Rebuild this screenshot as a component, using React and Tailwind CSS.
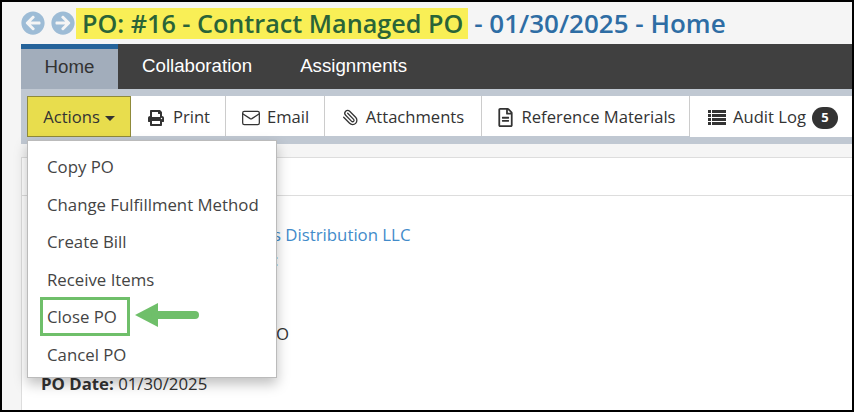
import React from 'react';
import { FaArrowCircleLeft, FaArrowCircleRight, FaPrint, FaRegFileAlt } from 'react-icons/fa';
import { Mail, Paperclip } from 'lucide-react';

const toolbarItems = [
    { label: 'Print', icon: <FaPrint size={16} />, width: 'w-[95px]', gap: 'gap-[9px] pl-[2px]' },
    { label: 'Email', icon: <Mail size={20} strokeWidth={1.5} />, width: 'w-[99px]', gap: 'gap-[6px]' },
    { label: 'Attachments', icon: <Paperclip size={17} strokeWidth={1.8} className="-scale-x-100" />, width: 'w-[157px]', gap: 'gap-[7px]' },
    { label: 'Reference Materials', icon: <FaRegFileAlt size={19} />, width: 'w-[208px]', gap: 'gap-[7px]' },
];

const menuItems = ['Copy PO', 'Change Fulfillment Method', 'Create Bill', 'Receive Items', 'Close PO', 'Cancel PO'];

const ListIcon = () => (
    <svg width="18" height="15" viewBox="0 0 18 15" fill="currentColor">
        <rect x="0" y="0" width="3" height="3" />
        <rect x="4" y="0" width="14" height="3" />
        <rect x="0" y="4" width="3" height="3" />
        <rect x="4" y="4" width="14" height="3" />
        <rect x="0" y="8" width="3" height="3" />
        <rect x="4" y="8" width="14" height="3" />
        <rect x="0" y="12" width="3" height="3" />
        <rect x="4" y="12" width="14" height="3" />
    </svg>
);

const App = () => {
    return (
        <div className="relative w-[854px] h-[412px] overflow-hidden border-2 border-black bg-[#f5f5f5] font-['Open_Sans','Noto_Sans',sans-serif] text-[#333]">
            <div className="h-[42px] flex items-center pl-[19px]">
                <FaArrowCircleLeft size={24} className="text-[#9dbcd6]" />
                <FaArrowCircleRight size={24} className="text-[#9dbcd6] ml-[6px]" />
                <h1 className="ml-[1px] font-semibold text-[#2e6da4] whitespace-nowrap flex items-center">
                    <span className="inline-block h-[31px] leading-[31px] text-[25.2px] bg-[#f9ef56] text-[#2a6438] pl-[6px] pr-[5px]">PO: #16 - Contract Managed PO</span>
                    <span className="ml-[6px] text-[26px]">- 01/30/2025 - Home</span>
                </h1>
            </div>

            <div className="ml-[19px]">
                <div className="h-[45px] bg-[#404040] flex font-['Liberation_Sans',sans-serif] text-[18.7px] text-white">
                    <div className="w-[97px] bg-[#a2adbb] border-t-[5px] border-[#25639a] text-[#333] flex items-center justify-center pb-[3px]">Home</div>
                    <div className="ml-[24px] flex items-center pb-[1px]">Collaboration</div>
                    <div className="ml-[48px] flex items-center pb-[1px]">Assignments</div>
                </div>

                <div className="h-[55px] bg-[#c0c8d2] pt-[7px] flex items-start text-[16.6px]">
                    <div className="ml-[6px] w-[104px] h-[41px] bg-[#e8dd4d] border border-[#8f8a3a] flex items-center justify-center pt-[2px]">
                        Actions
                        <span className="ml-[5px] mt-[2px] border-x-[5px] border-t-[5px] border-x-transparent border-t-[#333]"></span>
                    </div>
                    <div className="flex bg-white h-[40px]">
                        {toolbarItems.map((item) => (
                            <div key={item.label} className={`${item.width} ${item.gap} border-r border-[#ccc] flex items-center justify-center pt-[3px]`}>
                                {item.icon}
                                <span>{item.label}</span>
                            </div>
                        ))}
                    </div>
                    <div className="flex-1 bg-white h-[41px] flex items-center pl-[18px] pt-[2px] gap-[7px] whitespace-nowrap">
                        <ListIcon />
                        <span>Audit Log</span>
                        <span className="w-[26px] h-[22px] -ml-[1px] rounded-full bg-[#333] text-white text-[13px] font-bold flex items-center justify-center">5</span>
                    </div>
                </div>

                <div className="mt-[13px] h-[260px] bg-white border-l border-t border-[#ddd]">
                    <div className="h-[38px] border-b border-[#ddd]"></div>
                    <div className="pt-[27px] text-[16.8px] leading-[24.8px] whitespace-nowrap">
                        <div className="pl-[251px] text-[#428bca]">s Distribution LLC</div>
                        <div className="pl-[252px]">:</div>
                        <div className="h-[24.8px]"></div>
                        <div className="h-[24.8px]"></div>
                        <div className="pl-[254px]">O</div>
                        <div className="h-[24.8px]"></div>
                        <div className="pl-[19px]"><b>PO Date:</b> 01/30/2025</div>
                    </div>
                </div>
            </div>

            <div className="absolute left-[25px] top-[138px] w-[250px] h-[238px] bg-white border border-[#bbb] shadow-[0_6px_12px_rgba(0,0,0,0.25)] pt-[7px] text-[16.8px] text-[#444]">
                {menuItems.map((item) => (
                    <div key={item} className="h-[37.5px] pl-[19px] flex items-center whitespace-nowrap">{item}</div>
                ))}
            </div>

            <div className="absolute left-[38px] top-[295px] w-[90px] h-[39px] border-[3px] border-[#6fbf6a]"></div>
            <svg className="absolute left-[133px] top-[301px]" width="66" height="24" viewBox="0 0 66 24">
                <path d="M0 12 L23 0 V24 Z" fill="#6fbf6a" />
                <path d="M20 12 H60" stroke="#6fbf6a" strokeWidth="8" strokeLinecap="round" />
            </svg>
        </div>
    );
};

export default App;
